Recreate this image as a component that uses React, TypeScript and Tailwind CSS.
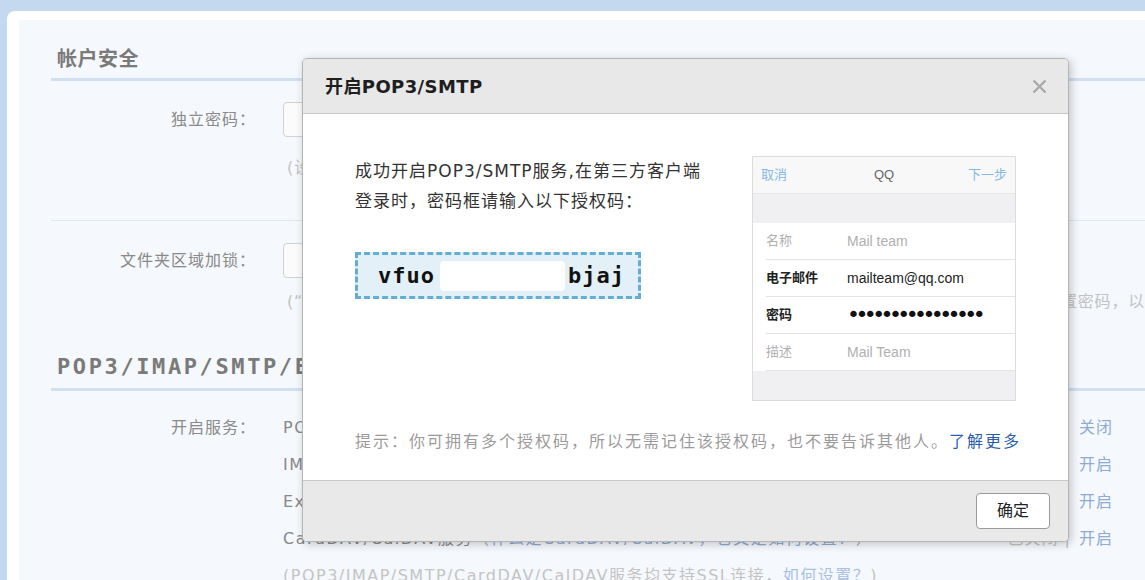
import { useState } from 'react';

interface Service {
    name: string;
    tip: string;
    state: string;
    action: string;
}

const services: Service[] = [
    { name: 'POP3/SMTP服务', tip: '如何使用 Foxmail 等软件收发邮件？', state: '已开启', action: '关闭' },
    { name: 'IMAP/SMTP服务', tip: '什么是 IMAP，它又是如何设置？', state: '已关闭', action: '开启' },
    { name: 'Exchange服务', tip: '什么是Exchange，它又是如何设置？', state: '已关闭', action: '开启' },
    { name: 'CardDAV/CalDAV服务', tip: '什么是CardDAV/CalDAV，它又是如何设置？', state: '已关闭', action: '开启' },
];

const phoneRows = [
    { label: '名称', value: 'Mail team', dark: false },
    { label: '电子邮件', value: 'mailteam@qq.com', dark: true },
    { label: '密码', value: '••••••••••••••••', dark: true, dots: true },
    { label: '描述', value: 'Mail Team', dark: false },
];

function PhonePreview() {
    return (
        <div className="w-[264px] h-[245px] border border-[#dcdcdc] flex flex-col font-['Liberation_Sans','Noto_Sans_CJK_SC',sans-serif]">
            <div className="h-[37px] shrink-0 bg-[#f8f8f9] border-b border-[#e8e8e8] grid grid-cols-3 items-center px-[8px] text-[13px]">
                <span className="text-[#86b8e6]">取消</span>
                <span className="text-center text-[#666]">QQ</span>
                <span className="text-right text-[#86b8e6]">下一步</span>
            </div>
            <div className="h-[29px] shrink-0 bg-[#f0f0f3]"></div>
            <div className="bg-white">
                {phoneRows.map((row) => (
                    <div key={row.label} className="ml-[13px] h-[37px] border-b border-[#e3e3e3] flex items-center text-[13px]">
                        <span className={`w-[81px] ${row.dark ? 'text-[#222] font-bold' : 'text-[#b0b0b0]'}`}>{row.label}</span>
                        {row.dots ? (
                            <span className="text-[22px] leading-[20px] tracking-[-4.6px] text-[#111] font-['DejaVu_Sans',sans-serif]">{row.value}</span>
                        ) : (
                            <span className={`text-[14px] ${row.dark ? 'text-[#222]' : 'text-[#b0b0b0]'}`}>{row.value}</span>
                        )}
                    </div>
                ))}
            </div>
            <div className="flex-1 bg-[#f0f0f3]"></div>
        </div>
    );
}

function Dialog({ onClose }: { onClose: () => void }) {
    return (
        <div className="absolute left-[302px] top-[58px] w-[767px] h-[484px] rounded-[5px] border border-[#b4b4b4] bg-white shadow-[2px_2px_10px_rgba(0,0,0,0.22)] overflow-hidden flex flex-col">
            <div className="h-[55px] shrink-0 bg-[#e8e8e8] border-b border-[#c9c9c9] flex items-center justify-between pl-[22px] pr-[21px]">
                <span className="text-[18px] font-bold tracking-[0.4px] text-[#1e1e1e]">开启POP3/SMTP</span>
                <button onClick={onClose} className="w-[16px] h-[16px] flex items-center justify-center">
                    <svg width="15" height="15" viewBox="0 0 15 15">
                        <path d="M1.5 1.5 13.5 13.5 M13.5 1.5 1.5 13.5" stroke="#a9a9a9" strokeWidth="2.4" />
                    </svg>
                </button>
            </div>

            <div className="flex-1 px-[52px] pt-[42px]">
                <div className="flex justify-between">
                    <div>
                        <p className="text-[17px] tracking-[1px] leading-[30px] text-[#333]">
                            成功开启POP3/SMTP服务,在第三方客户端
                            <br />
                            登录时，密码框请输入以下授权码：
                        </p>
                        <div className="mt-[36px] w-[286px] h-[47px] border-[3px] border-dashed border-[#64aed5] bg-[#e4f0f8] flex items-center pl-[20px] font-['DejaVu_Sans_Mono',monospace] font-bold text-[22px] tracking-[1px] text-[#111]">
                            <span>vfuo</span>
                            <span className="ml-[5px] w-[125px] h-[30px] bg-white rounded-[4px] blur-[0.6px]"></span>
                            <span className="ml-[3px]">bjaj</span>
                        </div>
                    </div>
                    <PhonePreview />
                </div>
                <p className="mt-[29px] text-[16px] tracking-[2px] leading-[24px] text-[#9b9b9b] whitespace-nowrap">
                    提示：你可拥有多个授权码，所以无需记住该授权码，也不要告诉其他人。
                    <a className="text-[#2a5caa]">了解更多</a>
                </p>
            </div>

            <div className="h-[61px] shrink-0 border-t border-[#c9c9c9] bg-[#e9e9e9] flex items-center justify-end pr-[18px]">
                <button onClick={onClose} className="w-[74px] h-[36px] rounded-[4px] border border-[#9a9a9a] bg-white text-[16px] text-[#222]">
                    确定
                </button>
            </div>
        </div>
    );
}

export default function App() {
    const [open, setOpen] = useState(true);

    return (
        <div className="relative w-[1145px] h-[580px] overflow-hidden bg-[#c4d9f0] pt-[11px] pl-[7px] font-['DejaVu_Sans','Noto_Sans_CJK_SC',sans-serif]">
            <div className="h-full w-[1200px] rounded-tl-[8px] bg-white pl-[12px] pt-[9px]">
                <div className="h-full bg-[#f5f8fc] pl-[32px] pr-[32px]">
                    {/* 帐户安全 */}
                    <div className="pt-[26px] pb-[8px] pl-[6px] border-b-[3px] border-[#d0e0f1]">
                        <h2 className="text-[20px] leading-[24px] font-bold tracking-[0.5px] text-[#7a7a7a] font-['Noto_Sans_CJK_SC',sans-serif]">帐户安全</h2>
                    </div>

                    <div className="mt-[21px] flex items-center">
                        <span className="w-[205px] text-right text-[16px] tracking-[1px] text-[#8a8a8a]">独立密码：</span>
                        <div className="ml-[27px] w-[220px] h-[35px] rounded-[4px] border border-[#d2d2d2] bg-[#fbfbfb]"></div>
                    </div>
                    <p className="mt-[19px] ml-[236px] text-[16px] leading-[24px] tracking-[1px] text-[#c2c2c2] whitespace-nowrap">
                        (设置独立密码后，登录第三方客户端时需使用独立密码)
                    </p>

                    <div className="mt-[40px] border-t border-[#e1e7ef]"></div>

                    <div className="mt-[22px] flex items-center">
                        <span className="w-[205px] text-right text-[16px] tracking-[1px] text-[#8a8a8a]">文件夹区域加锁：</span>
                        <div className="ml-[27px] w-[220px] h-[35px] rounded-[4px] border border-[#d2d2d2] bg-[#fbfbfb]"></div>
                    </div>
                    <p className="mt-[12px] ml-[236px] text-[16px] leading-[24px] tracking-[0.85px] text-[#c2c2c2] whitespace-nowrap">
                        (“文件夹区域加锁”可以为“我的文件夹”、“其他邮箱”、“记事本”、“日历”、“文件中转站”等区域单独设置密码，以防止他人查看您的隐私)
                    </p>

                    {/* POP3/IMAP/SMTP/Exchange/CardDAV/CalDAV服务 */}
                    <div className="mt-[38px] pb-[6px] pl-[6px] border-b-[3px] border-[#d0e0f1]">
                        <h2 className="text-[22px] leading-[30px] font-bold tracking-[2.6px] text-[#7a7a7a] font-['DejaVu_Sans_Mono','Noto_Sans_CJK_SC',monospace] whitespace-nowrap">
                            POP3/IMAP/SMTP/Exchange/CardDAV/CalDAV服务
                        </h2>
                    </div>

                    <div className="mt-[18px] flex">
                        <span className="w-[205px] text-right text-[16px] leading-[37px] tracking-[1px] text-[#8a8a8a]">开启服务：</span>
                        <div className="ml-[27px] w-[830px] text-[16px] leading-[37px] tracking-[1.5px]">
                            {services.map((s) => (
                                <div key={s.name} className="flex justify-between whitespace-nowrap">
                                    <span>
                                        <span className="text-[#888]">{s.name}</span>
                                        <span className="text-[#a8a8a8]">（</span>
                                        <a className="text-[#8eabd5]">{s.tip}</a>
                                        <span className="text-[#a8a8a8]">）</span>
                                    </span>
                                    <span className="flex gap-[8px] tracking-[1px]">
                                        <span className="text-[#c2c2c2]">{s.state} |</span>
                                        <a className="text-[#8eabd5]">{s.action}</a>
                                    </span>
                                </div>
                            ))}
                            <div className="whitespace-nowrap text-[#c4c4c4]">
                                (POP3/IMAP/SMTP/CardDAV/CalDAV服务均支持SSL连接，<a className="text-[#a9c0e2]">如何设置？</a>)
                            </div>
                        </div>
                    </div>
                </div>
            </div>

            {open && <Dialog onClose={() => setOpen(false)} />}
        </div>
    );
}
